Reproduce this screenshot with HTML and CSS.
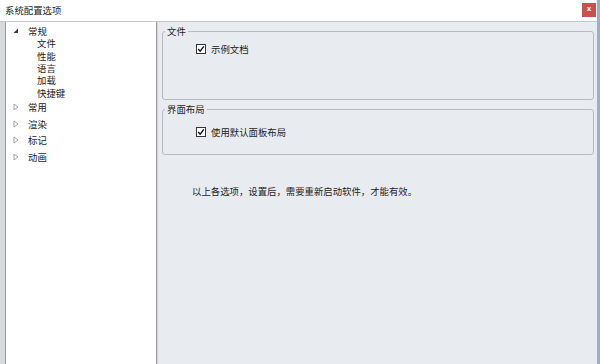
FILE: index.html
```html
<!DOCTYPE html>
<html lang="zh-CN">

<head>
    <meta charset="UTF-8">
    <title>系统配置选项</title>
    <link rel="stylesheet" href="styles.css">
</head>

<body>
    <div class="window">
        <div class="main">
            <!-- barra de titulo -->
            <div class="titlebar">
                <span class="title">系统配置选项</span>
                <span class="close">x</span>
            </div>

            <div class="content">
                <div class="edge-left"></div>

                <!-- arbol de opciones -->
                <ul class="tree">
                    <li class="node open">
                        <svg class="arrow" width="6" height="6" viewBox="0 0 6 6"><polygon points="5,0.5 5,5 0.5,5" fill="#3c3c3c"/></svg>
                        <span>常规</span>
                    </li>
                    <li class="leaf">文件</li>
                    <li class="leaf">性能</li>
                    <li class="leaf">语言</li>
                    <li class="leaf">加载</li>
                    <li class="leaf">快捷键</li>
                    <li class="node">
                        <svg class="arrow" width="6" height="8" viewBox="0 0 6 8"><polygon points="1,1 5,4 1,7" fill="none" stroke="#9a9a9a" stroke-width="0.9"/></svg>
                        <span>常用</span>
                    </li>
                    <li class="node">
                        <svg class="arrow" width="6" height="8" viewBox="0 0 6 8"><polygon points="1,1 5,4 1,7" fill="none" stroke="#9a9a9a" stroke-width="0.9"/></svg>
                        <span>渲染</span>
                    </li>
                    <li class="node">
                        <svg class="arrow" width="6" height="8" viewBox="0 0 6 8"><polygon points="1,1 5,4 1,7" fill="none" stroke="#9a9a9a" stroke-width="0.9"/></svg>
                        <span>标记</span>
                    </li>
                    <li class="node">
                        <svg class="arrow" width="6" height="8" viewBox="0 0 6 8"><polygon points="1,1 5,4 1,7" fill="none" stroke="#9a9a9a" stroke-width="0.9"/></svg>
                        <span>动画</span>
                    </li>
                </ul>

                <!-- panel de opciones -->
                <div class="panel">
                    <fieldset class="group group-file">
                        <legend>文件</legend>
                        <div class="check">
                            <svg class="box" width="10" height="10" viewBox="0 0 10 10"><rect x="0.5" y="0.5" width="9" height="9" fill="#fff" stroke="#333"/><polyline points="2.2,5 4.2,7.2 7.8,2.4" fill="none" stroke="#111" stroke-width="1.4"/></svg>
                            <span>示例文档</span>
                        </div>
                    </fieldset>

                    <fieldset class="group group-layout">
                        <legend>界面布局</legend>
                        <div class="check">
                            <svg class="box" width="10" height="10" viewBox="0 0 10 10"><rect x="0.5" y="0.5" width="9" height="9" fill="#fff" stroke="#333"/><polyline points="2.2,5 4.2,7.2 7.8,2.4" fill="none" stroke="#111" stroke-width="1.4"/></svg>
                            <span>使用默认面板布局</span>
                        </div>
                    </fieldset>

                    <p class="note">以上各选项，设置后，需要重新启动软件，才能有效。</p>
                </div>
            </div>
        </div>
        <div class="edge-right"></div>
    </div>
</body>

</html>
```

FILE: styles.css
```css
html, body {
    margin: 0;
    padding: 0;
}

body {
    width: 600px;
    height: 364px;
    overflow: hidden;
    font-family: "Noto Sans CJK SC", "Noto Sans", sans-serif;
    font-size: 9.4px;
    color: #1c1c1c;
}

.window {
    display: flex;
    height: 364px;
}

.main {
    flex: 1;
    display: flex;
    flex-direction: column;
}

/* Barra de titulo */
.titlebar {
    height: 22px;
    display: flex;
    align-items: center;
    justify-content: space-between;
    background-color: #ffffff;
    border-bottom: 1px solid #c6c9ce;
    box-sizing: border-box;
}

.title {
    padding-left: 5px;
    line-height: 12px;
    margin-top: -1px;
}

.close {
    width: 14px;
    height: 14px;
    margin-right: 1px;
    margin-bottom: 2px;
    background-color: #c9504f;
    color: #ffffff;
    font-family: "DejaVu Sans", sans-serif;
    font-size: 7px;
    font-weight: bold;
    line-height: 13px;
    text-align: center;
}

.edge-right {
    width: 3px;
    background-color: #9bb0c6;
}

.content {
    flex: 1;
    display: flex;
}

.edge-left {
    width: 5px;
    background-color: #d7dadd;
}

/* Arbol */
.tree {
    width: 150px;
    margin: 0;
    padding: 3px 0 0 0;
    list-style: none;
    background-color: #ffffff;
    border-left: 1px solid #9d9d9d;
    border-right: 1px solid #9d9d9d;
    box-sizing: border-box;
    width: 152px;
}

.tree li {
    display: flex;
    align-items: center;
    line-height: 12px;
}

.node {
    height: 16.5px;
    padding-left: 7px;
}

.node.open {
    height: 12px;
}

.arrow {
    width: 6px;
    margin-right: 9px;
}

.leaf {
    height: 12.4px;
    padding-left: 31px;
}

/* Panel derecho */
.panel {
    flex: 1;
    background-color: #e8ebf0;
    border-left: 1px solid #d2d5d9;
    padding: 3px 3px 0 4px;
}

.group {
    margin: 0;
    padding: 0 2px;
    border: 1px solid #b7babe;
    border-radius: 3px;
    box-sizing: border-box;
}

.group legend {
    padding: 0 2px;
    line-height: 12px;
}

.group-file {
    height: 75px;
}

.group-layout {
    height: 52px;
    margin-top: 3px;
}

.check {
    display: flex;
    align-items: center;
    margin-left: 31px;
    line-height: 12px;
}

.group-file .check {
    margin-top: 6px;
}

.group-layout .check {
    margin-top: 11px;
}

.box {
    margin-right: 5px;
}

.note {
    margin: 30px 0 0 30px;
    line-height: 12px;
}
```
